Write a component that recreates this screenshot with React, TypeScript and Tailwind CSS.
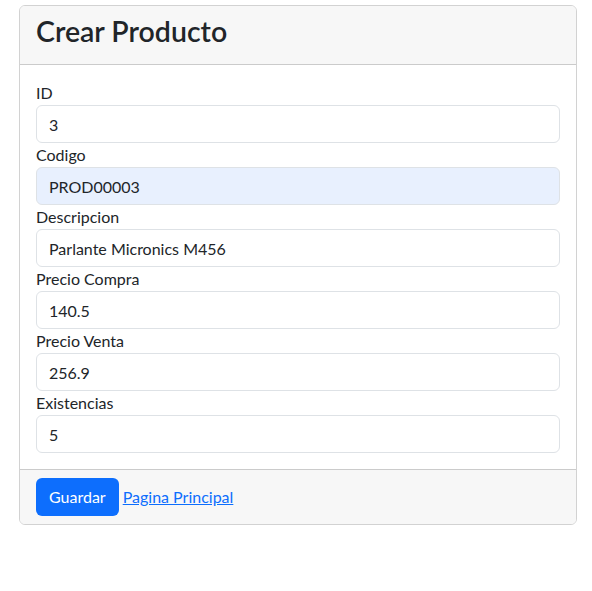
import React from 'react';

const FIELDS = [
  { id: 'id', label: 'ID', value: '3' },
  { id: 'codigo', label: 'Codigo', value: 'PROD00003', autofill: true },
  { id: 'descripcion', label: 'Descripcion', value: 'Parlante Micronics M456' },
  { id: 'precioCompra', label: 'Precio Compra', value: '140.5' },
  { id: 'precioVenta', label: 'Precio Venta', value: '256.9' },
  { id: 'existencias', label: 'Existencias', value: '5' },
];

export default function App() {
  return (
    <div className="min-h-[591px] bg-white px-[19px] pt-[5px] text-[#212529] font-['Segoe_UI','Lato',sans-serif]">
      <div className="w-[558px] rounded-[6px] border border-black/[0.175]">
        <div className="rounded-t-[5px] border-b border-black/[0.175] bg-[#f7f7f7] px-4 pt-2 pb-2">
          <h2 className="mb-2 text-[28.5px] font-semibold leading-[34px]">Crear Producto</h2>
        </div>
        <div className="p-4">
          {FIELDS.map((f) => (
            <div key={f.id}>
              <label htmlFor={f.id} className="block text-base leading-6">
                {f.label}
              </label>
              <input
                id={f.id}
                defaultValue={f.value}
                className={`block h-[38px] w-full rounded-[6px] border border-[#dee2e6] px-3 py-1.5 text-base leading-6 outline-none ${
                  f.autofill ? 'bg-[#e8f0fe]' : 'bg-white'
                }`}
              />
            </div>
          ))}
        </div>
        <div className="flex items-center gap-1 rounded-b-[5px] border-t border-black/[0.175] bg-[#f7f7f7] px-4 py-2">
          <button
            type="button"
            className="h-[38px] rounded-[6px] bg-[#0d6efd] px-[13px] text-base leading-6 text-white"
          >
            Guardar
          </button>
          <a href="#" className="text-base leading-6 text-[#0d6efd] underline">
            Pagina Principal
          </a>
        </div>
      </div>
    </div>
  );
}
